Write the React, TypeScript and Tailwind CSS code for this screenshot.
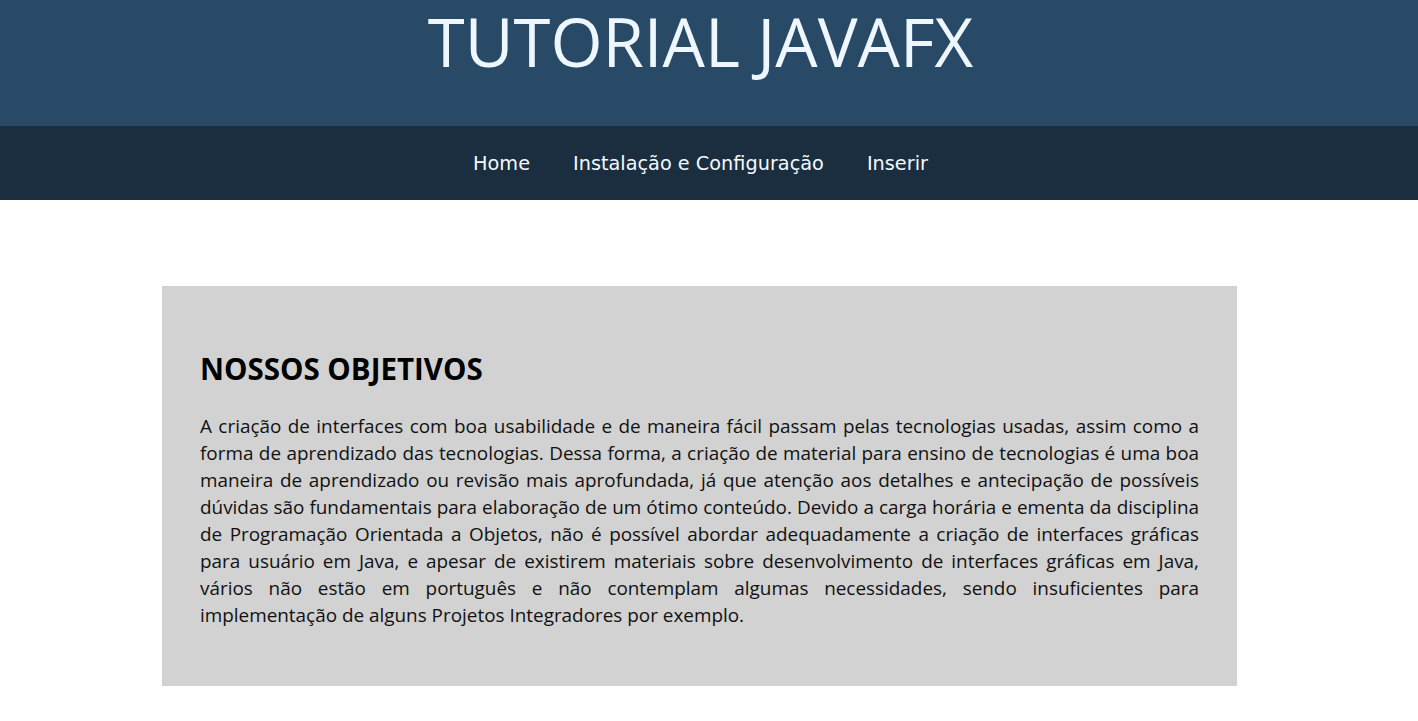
import React from "react";

const navItems = ["Home", "Instalação e Configuração", "Inserir"];

// Linhas do parágrafo, como quebram na página original
const linhas = [
  "A criação de interfaces com boa usabilidade e de maneira fácil passam pelas tecnologias usadas, assim como a",
  "forma de aprendizado das tecnologias. Dessa forma, a criação de material para ensino de tecnologias é uma boa",
  "maneira de aprendizado ou revisão mais aprofundada, já que atenção aos detalhes e antecipação de possíveis",
  "dúvidas são fundamentais para elaboração de um ótimo conteúdo. Devido a carga horária e ementa da disciplina",
  "de Programação Orientada a Objetos, não é possível abordar adequadamente a criação de interfaces gráficas",
  "para usuário em Java, e apesar de existirem materiais sobre desenvolvimento de interfaces gráficas em Java,",
  "vários não estão em português e não contemplam algumas necessidades, sendo insuficientes para",
  "implementação de alguns Projetos Integradores por exemplo.",
];

export default function App() {
  return (
    <div className="min-h-screen bg-white font-['Open_Sans',sans-serif]">
      {/* Header */}
      <header className="flex h-[126px] items-start justify-center bg-[#284a66] pr-[17px] pt-[8px]">
        <h1 className="text-[67px] leading-[67px] text-[#eef7ff]">
          TUTORIAL JAVAFX
        </h1>
      </header>

      {/* Navigation */}
      <nav className="flex h-[74px] items-center justify-center gap-[43px] bg-[#1a2e3f] pr-[17px] pt-[2px]">
        {navItems.map((item) => (
          <a
            key={item}
            href="#"
            className="font-['DejaVu_Sans',sans-serif] text-[19.3px] text-[#f4f9ff]"
          >
            {item}
          </a>
        ))}
      </nav>

      {/* Content */}
      <main className="pt-[86px]">
        <section className="ml-[162px] h-[400px] w-[1075px] bg-[#d2d2d2] px-[38px] pt-[65px]">
          <h2 className="text-[29.5px] font-bold leading-[36px] text-black">
            NOSSOS OBJETIVOS
          </h2>
          <p className="mt-[26px] text-[18.9px] leading-[27px] text-[#111]">
            {linhas.map((linha, i) => (
              <span
                key={i}
                className={
                  i < linhas.length - 1
                    ? "block whitespace-nowrap text-justify [text-align-last:justify]"
                    : "block whitespace-nowrap"
                }
              >
                {linha}
              </span>
            ))}
          </p>
        </section>
      </main>
    </div>
  );
}
